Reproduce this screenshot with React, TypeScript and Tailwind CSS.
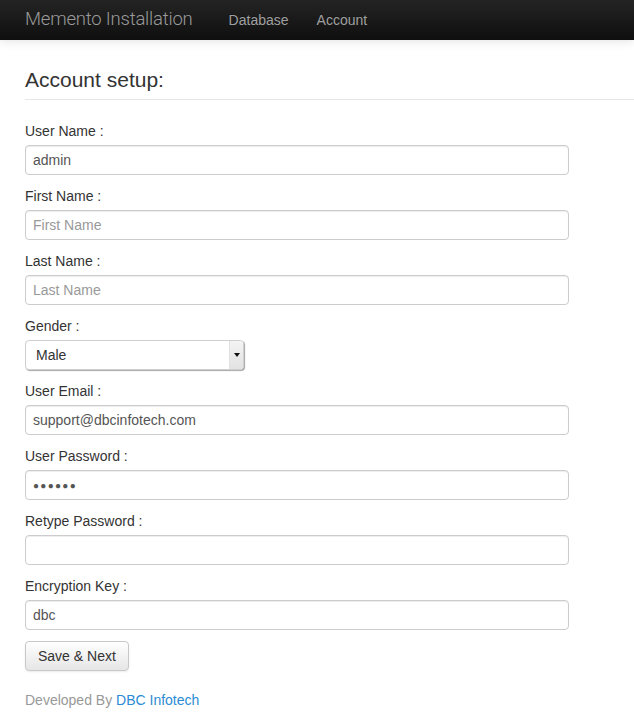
import React from "react";

const font = { fontFamily: '"Liberation Sans", Arial, Helvetica, sans-serif' };

function Field({ label, value, placeholder }: { label: string; value?: string; placeholder?: string }) {
  return (
    <div className="mb-[11px]">
      <label className="block h-[20px] leading-[20px] text-[14px] text-[#333] mb-[4px]">{label}</label>
      <input
        readOnly
        defaultValue={value}
        placeholder={placeholder}
        className="block w-[544px] h-[30px] px-[7px] border border-[#ccc] rounded-[4px] bg-white text-[14px] text-[#555] placeholder:text-[#999] outline-none shadow-[inset_0_1px_1px_rgba(0,0,0,0.075)]"
        style={font}
      />
    </div>
  );
}

export default function App() {
  return (
    <div className="min-h-[715px] bg-white" style={font}>
      <nav className="h-[40px] bg-gradient-to-b from-[#242424] to-[#0f0f0f] shadow-[0_1px_10px_rgba(0,0,0,0.12)] flex items-center pl-[25px]">
        <span
          className="text-[18.5px] font-light text-[#9a9a9a] tracking-[-0.2px]"
          style={{ fontFamily: '"Roboto", "Liberation Sans", sans-serif' }}
        >
          Memento Installation
        </span>
        <a className="ml-[36px] text-[14px] text-[#a0a0a0] [text-shadow:0_-1px_0_rgba(0,0,0,0.25)]">Database</a>
        <a className="ml-[28px] text-[14px] text-[#a0a0a0] [text-shadow:0_-1px_0_rgba(0,0,0,0.25)]">Account</a>
      </nav>

      <main className="pl-[25px]">
        <h3 className="mt-[28px] h-[23px] leading-[23px] text-[21px] text-[#333] pb-[8px] box-content border-b border-[#e6e6e6]">
          Account setup:
        </h3>

        <form className="mt-[21px]">
          <Field label="User Name :" value="admin" />
          <Field label="First Name :" placeholder="First Name" />
          <Field label="Last Name :" placeholder="Last Name" />

          <div className="mb-[11px]">
            <label className="block h-[20px] leading-[20px] text-[14px] text-[#333] mb-[4px]">Gender :</label>
            <div className="flex w-[219px] h-[30px] border border-[#cfcfcf] rounded-[4px] bg-white shadow-[1px_1px_1px_rgba(0,0,0,0.35)]">
              <div className="flex-1 flex items-center pl-[10px] text-[14px] text-[#333]">Male</div>
              <div className="w-[14px] flex items-center justify-center bg-gradient-to-b from-[#f4f4f4] to-[#e2e2e2] rounded-r-[3px] border-l border-[#e0e0e0]">
                <svg width="6" height="4" viewBox="0 0 6 4">
                  <path d="M0 0 L6 0 L3 4 Z" fill="#111" />
                </svg>
              </div>
            </div>
          </div>

          <Field label="User Email :" value="support@dbcinfotech.com" />

          <div className="mb-[11px]">
            <label className="block h-[20px] leading-[20px] text-[14px] text-[#333] mb-[4px]">User Password :</label>
            <div className="flex items-center w-[544px] h-[30px] px-[7px] border border-[#ccc] rounded-[4px] bg-white text-[10px] tracking-[1.3px] text-[#555] shadow-[inset_0_1px_1px_rgba(0,0,0,0.075)]">
              ●●●●●●
            </div>
          </div>

          <Field label="Retype Password :" />
          <Field label="Encryption Key :" value="dbc" />

          <button
            type="button"
            className="h-[30px] px-[12px] text-[14px] text-[#333] border border-[#c8c8c8] rounded-[4px] bg-gradient-to-b from-[#ffffff] to-[#e6e6e6] shadow-[0_1px_2px_rgba(0,0,0,0.08)]"
          >
            Save &amp; Next
          </button>
        </form>

        <p className="mt-[19px] h-[20px] leading-[20px] text-[14px] text-[#999]">
          Developed By <a className="text-[#2b8bd3]">DBC Infotech</a>
        </p>
      </main>
    </div>
  );
}
